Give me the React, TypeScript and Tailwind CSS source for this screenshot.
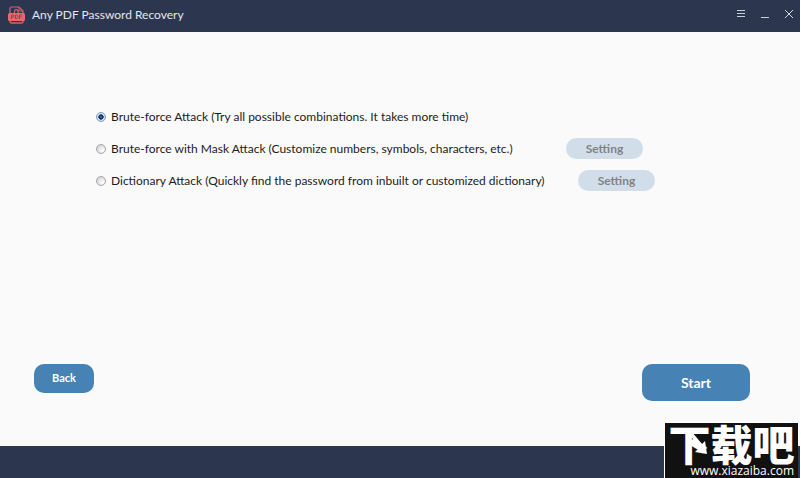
import React, { useState } from 'react';

interface AttackOption {
  id: string;
  label: string;
  settingClass?: string;
}

const attackOptions: AttackOption[] = [
  { id: 'brute-force', label: 'Brute-force Attack (Try all possible combinations. It takes more time)' },
  {
    id: 'mask',
    label: 'Brute-force with Mask Attack (Customize numbers, symbols, characters, etc.)',
    settingClass: 'left-[470px]',
  },
  {
    id: 'dictionary',
    label: 'Dictionary Attack (Quickly find the password from inbuilt or customized dictionary)',
    settingClass: 'left-[482px]',
  },
];

const PdfIcon: React.FC = () => (
  <svg width="17" height="18" viewBox="0 0 17 18" fill="none" aria-hidden="true">
    <path d="M2 8V2.5Q2 1 3.5 1H11l4 4v3" stroke="#d9606b" strokeWidth="1.2" />
    <path d="M11 1v4h4" stroke="#d9606b" />
    <path d="M2 14v1.5Q2 17 3.5 17h10q1.5 0 1.5-1.5V14" stroke="#d9606b" strokeWidth="1.4" />
    <path d="M6.5 7V5.5a1.8 1.8 0 0 1 3.6 0V7" stroke="#d9606b" strokeWidth="1.2" />
    <rect y="7" width="17" height="8" rx="1.5" fill="#ec6670" />
    <path
      d="M3.5 13V9h1.3a1 1 0 0 1 0 2.2H3.5M7.5 9v3.7h.8c2 0 2-3.7 0-3.7zM11.5 13V9H14M11.5 11h2"
      stroke="#8a3f53"
      strokeWidth="0.9"
    />
  </svg>
);

const TitleBar: React.FC = () => (
  <header className="flex h-8 items-center justify-between bg-[#2c364f] pb-0.5 pl-2 pr-1.5 text-[#e3e7ee]">
    <div className="flex items-center gap-[7px]">
      <PdfIcon />
      <h1 className="text-[12px]">Any PDF Password Recovery</h1>
    </div>
    <div className="flex items-center gap-[14px] pb-0.5">
      <button type="button" aria-label="Menu">
        <svg width="10" height="10" viewBox="0 0 10 10" stroke="#c9ced8" fill="none">
          <path d="M1 1.5h8M1 4.5h8M1 7.5h8" />
        </svg>
      </button>
      <button type="button" aria-label="Minimize">
        <svg width="10" height="10" viewBox="0 0 10 10" stroke="#c9ced8" fill="none">
          <path d="M1 8.5h8" />
        </svg>
      </button>
      <button type="button" aria-label="Close">
        <svg width="10" height="10" viewBox="0 0 10 10" stroke="#d5d9e1" fill="none">
          <path d="M1 1l8 8M9 1L1 9" />
        </svg>
      </button>
    </div>
  </header>
);

const SiteBadge: React.FC = () => (
  <div className="absolute bottom-0 right-0.5 flex w-[134px] flex-col border-l border-t border-white bg-[#111111] text-white">
    <p className="whitespace-nowrap text-center font-['Noto_Sans_CJK_SC',sans-serif] text-[42px] font-black leading-[40px]">
      下载吧
    </p>
    <p className="pr-1 text-right font-['Open_Sans',sans-serif] text-[12px] leading-[15px]">www.xiazaiba.com</p>
    {/* arrow laid over the dot stroke of the first character */}
    <svg className="absolute left-5 top-2" width="24" height="24" viewBox="0 0 24 24" aria-hidden="true">
      <path d="M3 1H7L17 13L20 10L22 23L10 21L14 17Z" fill="#ffffff" />
    </svg>
  </div>
);

export default function App() {
  const [selected, setSelected] = useState('brute-force');

  return (
    <div className="relative flex min-h-screen flex-col border-r border-white bg-[#fafafa] font-['Lato',sans-serif]">
      <TitleBar />

      <main className="flex flex-1 flex-col justify-between pb-[45px] pt-[69px]">
        <fieldset className="pl-24 text-[12px] text-[#1c1c1c]">
          {attackOptions.map(option => (
            <div key={option.id} className="relative flex h-8 items-center">
              <label className="flex items-center gap-[5px] whitespace-nowrap">
                <input
                  type="radio"
                  name="attack"
                  value={option.id}
                  checked={selected === option.id}
                  onChange={() => setSelected(option.id)}
                  className="h-2.5 w-2.5 appearance-none rounded-full border border-[#a3a5a8] bg-[radial-gradient(circle_at_70%_70%,#ffffff,#c6c9cc)] checked:border-[#7f9cb8] checked:bg-[radial-gradient(circle,#4f86b8_0,#122f63_30%,#173664_42%,#cfe0ee_52%)]"
                />
                {option.label}
              </label>
              {option.settingClass && (
                <button
                  type="button"
                  className={`absolute top-[5px] h-[21px] w-[77px] rounded-full bg-[#d1deea] text-[12px] font-bold text-[#7f8386] ${option.settingClass}`}
                >
                  Setting
                </button>
              )}
            </div>
          ))}
        </fieldset>

        <div className="flex items-start justify-between pl-[34px] pr-[50px] font-bold text-white">
          <button type="button" className="h-[29px] w-[60px] rounded-[10px] bg-[#4682b4] text-[11px]">
            Back
          </button>
          <button type="button" className="h-[37px] w-[108px] rounded-[10px] bg-[#4682b4] text-[14px]">
            Start
          </button>
        </div>
      </main>

      <footer className="h-8 bg-[#2c364f]" />
      <SiteBadge />
    </div>
  );
}
